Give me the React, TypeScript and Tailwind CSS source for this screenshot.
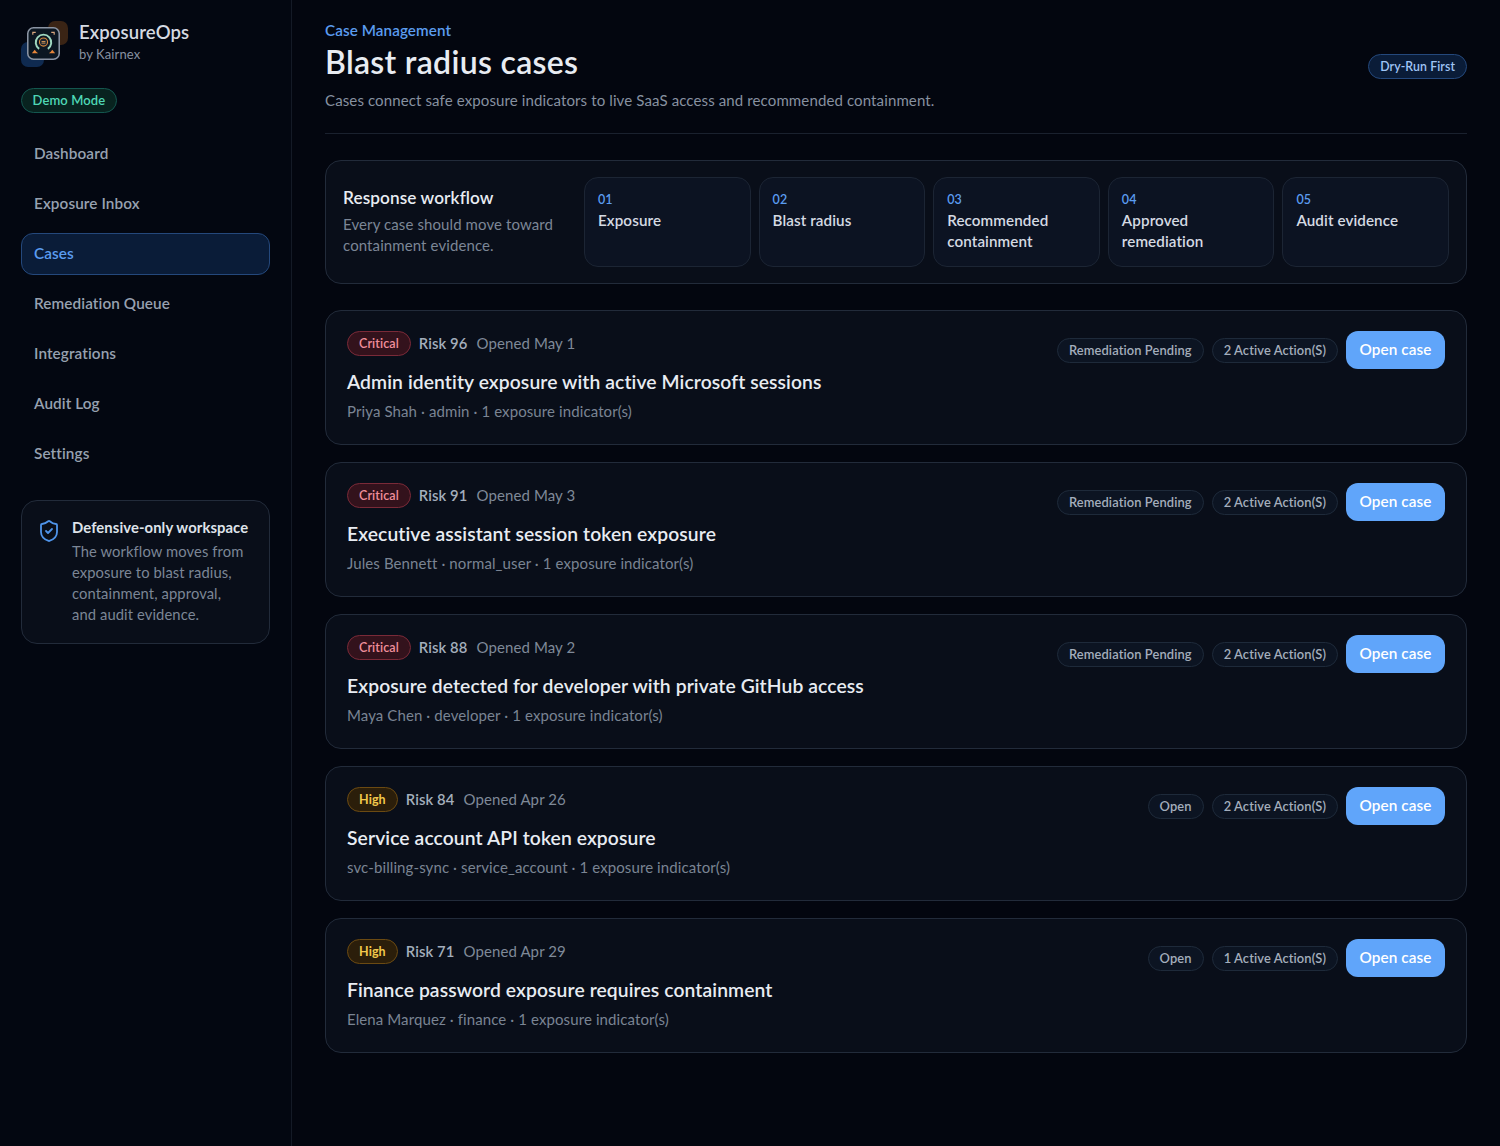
import React from "react";
import { ShieldCheck } from "lucide-react";

interface CaseItem {
  severity: "Critical" | "High";
  risk: number;
  opened: string;
  title: string;
  meta: string;
  status: string;
  actions: string;
}

const navItems = ["Dashboard", "Exposure Inbox", "Cases", "Remediation Queue", "Integrations", "Audit Log", "Settings"];

const steps = [
  { num: "01", label: "Exposure" },
  { num: "02", label: "Blast radius" },
  { num: "03", label: "Recommended containment" },
  { num: "04", label: "Approved remediation" },
  { num: "05", label: "Audit evidence" },
];

const cases: CaseItem[] = [
  {
    severity: "Critical",
    risk: 96,
    opened: "Opened May 1",
    title: "Admin identity exposure with active Microsoft sessions",
    meta: "Priya Shah · admin · 1 exposure indicator(s)",
    status: "Remediation Pending",
    actions: "2 Active Action(S)",
  },
  {
    severity: "Critical",
    risk: 91,
    opened: "Opened May 3",
    title: "Executive assistant session token exposure",
    meta: "Jules Bennett · normal_user · 1 exposure indicator(s)",
    status: "Remediation Pending",
    actions: "2 Active Action(S)",
  },
  {
    severity: "Critical",
    risk: 88,
    opened: "Opened May 2",
    title: "Exposure detected for developer with private GitHub access",
    meta: "Maya Chen · developer · 1 exposure indicator(s)",
    status: "Remediation Pending",
    actions: "2 Active Action(S)",
  },
  {
    severity: "High",
    risk: 84,
    opened: "Opened Apr 26",
    title: "Service account API token exposure",
    meta: "svc-billing-sync · service_account · 1 exposure indicator(s)",
    status: "Open",
    actions: "2 Active Action(S)",
  },
  {
    severity: "High",
    risk: 71,
    opened: "Opened Apr 29",
    title: "Finance password exposure requires containment",
    meta: "Elena Marquez · finance · 1 exposure indicator(s)",
    status: "Open",
    actions: "1 Active Action(S)",
  },
];

const Logo = () => (
  <div className="relative w-[46px] h-[46px] shrink-0">
    <div className="absolute left-0 top-[24px] w-[23px] h-[25px] rounded-[7px] bg-[#0f2a50]" />
    <div className="absolute left-[27px] top-[3px] w-[20px] h-[24px] rounded-[7px] bg-[#3a2415]" />
    <svg viewBox="0 0 34 34" className="absolute left-[6px] top-[9px] w-[33px] h-[33px]">
      <rect x="0.8" y="0.8" width="32.4" height="32.4" rx="6" fill="#0c1722" stroke="#8a94a3" strokeWidth="1.6" />
      <path d="M6 8V5.5H9M25 5.5H28V8" fill="none" stroke="#d9a77f" strokeWidth="1.2" />
      <path d="M12.5 22.5A8 8 0 1 1 21.5 22.5" fill="none" stroke="#9fd8c0" strokeWidth="2" />
      <circle cx="17" cy="15.5" r="4.2" fill="#1a2430" stroke="#d98a3d" strokeWidth="1.1" />
      <path d="M15 15h4M15 16.6h4" stroke="#e9a45c" strokeWidth="0.9" />
      <path d="M5 27l3-3.5 1.5 2 2 1.5zM29 27l-3-3.5-1.5 2-2 1.5z" fill="#e8863a" />
    </svg>
  </div>
);

const Pill = ({ children }: { children: React.ReactNode }) => (
  <span className="h-[25px] flex items-center pt-px px-[11px] rounded-full border border-[#1e2a3a] bg-[#0c1422] text-[12.9px] font-semibold text-[#a4aebc] whitespace-nowrap">
    {children}
  </span>
);

const CaseCard = ({ item }: { item: CaseItem }) => (
  <div className="h-[135px] rounded-[16px] border border-[#222b3a] bg-[#090e19] pt-[20px] pl-[21px] pr-[21px] flex justify-between items-start">
    <div>
      <div className="flex items-center h-[25px] text-[15px]">
        {item.severity === "Critical" ? (
          <span className="h-[25px] flex items-center pt-px px-[11px] rounded-full border border-[#7a2a38] bg-[#33121c] text-[12.5px] font-semibold text-[#f08f9b]">
            Critical
          </span>
        ) : (
          <span className="h-[25px] flex items-center pt-px px-[11px] rounded-full border border-[#6b4a12] bg-[#2b1e0a] text-[12.5px] font-bold text-[#f2c84b]">
            High
          </span>
        )}
        <span className="ml-[8px] text-[14.8px] font-semibold text-[#a4aebc]">Risk {item.risk}</span>
        <span className="ml-[9px] text-[#7f8998]">{item.opened}</span>
      </div>
      <h3 className="mt-[12px] text-[19.3px] leading-[28px] font-semibold text-[#e8ecf2]">{item.title}</h3>
      <p className="mt-[4px] text-[15px] leading-[22px] text-[#7a8493]">{item.meta}</p>
    </div>
    <div className="flex items-center gap-[8px]">
      <Pill>{item.status}</Pill>
      <Pill>{item.actions}</Pill>
      <button className="w-[99px] h-[38px] pb-px rounded-[12px] bg-[#60a5fa] text-white text-[15.3px] font-semibold">Open case</button>
    </div>
  </div>
);

export default function App() {
  return (
    <div className="flex min-h-[1146px] bg-[#03060f] font-['Lato',sans-serif] tracking-[0.1px]">
      <aside className="w-[292px] shrink-0 border-r border-[#141a26] bg-[#030711] px-[21px] pt-[18px]">
        <div className="flex items-center gap-[12px]">
          <Logo />
          <div>
            <div className="text-[18.5px] leading-[26px] font-semibold text-[#d5dae2]">ExposureOps</div>
            <div className="text-[13px] leading-[18px] text-[#8791a0]">by Kairnex</div>
          </div>
        </div>
        <span className="mt-[24px] inline-flex h-[25px] items-center px-[10.5px] rounded-full border border-[#14574f] bg-[#08231f] text-[13px] font-semibold text-[#4fd8b6]">
          Demo Mode
        </span>
        <nav className="mt-[20px] flex flex-col gap-[8px]">
          {navItems.map((name) =>
            name === "Cases" ? (
              <div key={name} className="h-[42px] flex items-center pb-[2px] pl-[12px] pr-[13px] rounded-[12px] border border-[#24487c] bg-[#0a1c38] text-[15.3px] font-semibold text-[#5b9cf0]">
                {name}
              </div>
            ) : (
              <div key={name} className="h-[42px] flex items-center pb-[2px] px-[13px] text-[15.3px] font-semibold text-[#97a1b0]">
                {name}
              </div>
            )
          )}
        </nav>
        <div className="mt-[25px] h-[144px] rounded-[16px] border border-[#222b3a] bg-[#090e19] pl-[15px] pr-[22px] pt-[16px] flex gap-[11px]">
          <ShieldCheck size={24} strokeWidth={1.8} color="#4f94ea" className="shrink-0 mt-[2px]" />
          <div>
            <div className="text-[14.8px] leading-[21px] font-bold text-[#dfe3ea] whitespace-nowrap">Defensive-only workspace</div>
            <p className="mt-[3px] text-[14.75px] leading-[21px] text-[#7c8696]">
              The workflow moves from exposure to blast radius, containment, approval, and audit evidence.
            </p>
          </div>
        </div>
      </aside>

      <main className="flex-1 px-[33px] pt-[20px]">
        <header className="h-[114px] border-b border-[#1a212e] flex justify-between items-start">
          <div>
            <div className="text-[15.2px] leading-[21px] font-semibold text-[#5b9cf0]">Case Management</div>
            <h1 className="mt-[2px] text-[32px] leading-[38px] tracking-[0.3px] font-semibold text-[#e8ecf2]">Blast radius cases</h1>
            <p className="mt-[8px] text-[15.05px] leading-[22px] text-[#8791a0]">
              Cases connect safe exposure indicators to live SaaS access and recommended containment.
            </p>
          </div>
          <span className="mt-[34px] h-[25px] flex items-center pt-px px-[11px] rounded-full border border-[#24487c] bg-[#0a1c38] text-[12.3px] font-semibold text-[#9fc4f5]">
            Dry-Run First
          </span>
        </header>

        <section className="mt-[26px] h-[124px] rounded-[16px] border border-[#222b3a] bg-[#090e19] py-[16px] px-[17px] flex">
          <div className="w-[241px] shrink-0 pt-[9px]">
            <h2 className="text-[17.2px] leading-[24px] font-semibold text-[#e8ecf2]">Response workflow</h2>
            <p className="mt-[4px] text-[15px] leading-[21px] text-[#7c8696]">Every case should move toward containment evidence.</p>
          </div>
          <div className="flex-1 grid grid-cols-5 gap-[8px]">
            {steps.map((step) => (
              <div key={step.num} className="rounded-[14px] border border-[#1c2534] bg-[#0c1322] px-[13px] pt-[13px]">
                <div className="text-[12.5px] leading-[17px] font-semibold text-[#5b9cf0]">{step.num}</div>
                <div className="mt-[2px] text-[15.2px] leading-[21px] font-semibold text-[#d5dae2]">{step.label}</div>
              </div>
            ))}
          </div>
        </section>

        <section className="mt-[26px] flex flex-col gap-[17px]">
          {cases.map((item) => (
            <CaseCard key={item.risk} item={item} />
          ))}
        </section>
      </main>
    </div>
  );
}
